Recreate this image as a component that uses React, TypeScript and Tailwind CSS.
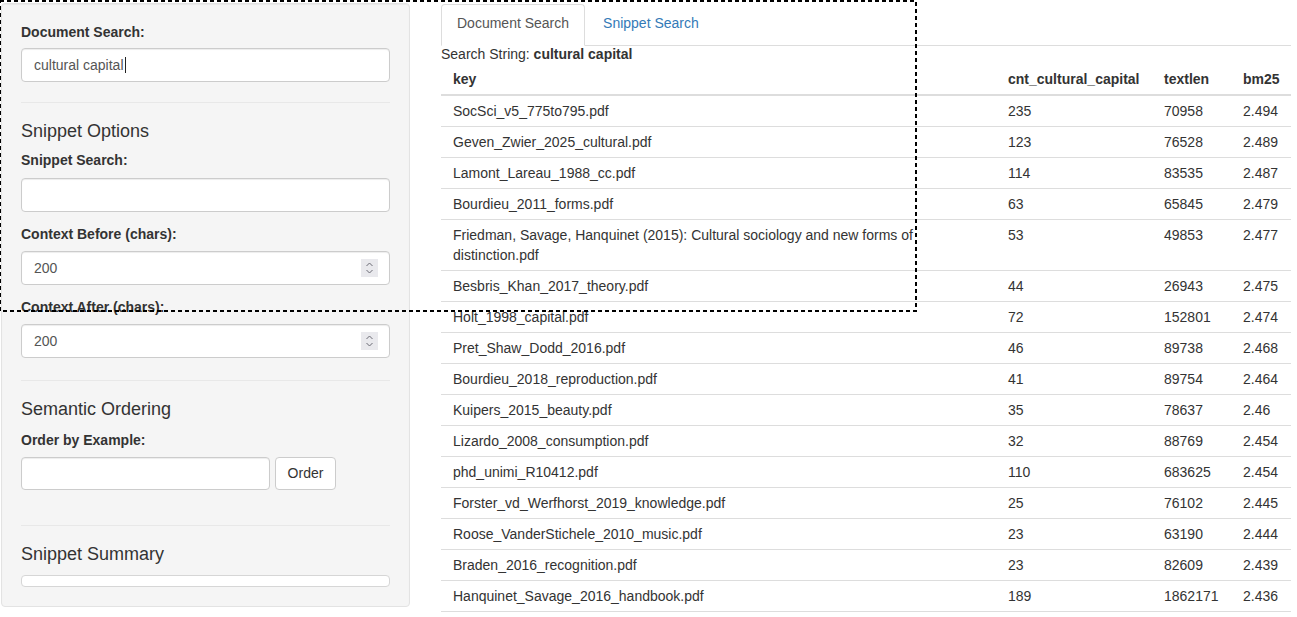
import React from 'react'

const rows: [string, string, string, string][] = [
  ['SocSci_v5_775to795.pdf', '235', '70958', '2.494'],
  ['Geven_Zwier_2025_cultural.pdf', '123', '76528', '2.489'],
  ['Lamont_Lareau_1988_cc.pdf', '114', '83535', '2.487'],
  ['Bourdieu_2011_forms.pdf', '63', '65845', '2.479'],
  ['Friedman, Savage, Hanquinet (2015): Cultural sociology and new forms of distinction.pdf', '53', '49853', '2.477'],
  ['Besbris_Khan_2017_theory.pdf', '44', '26943', '2.475'],
  ['Holt_1998_capital.pdf', '72', '152801', '2.474'],
  ['Pret_Shaw_Dodd_2016.pdf', '46', '89738', '2.468'],
  ['Bourdieu_2018_reproduction.pdf', '41', '89754', '2.464'],
  ['Kuipers_2015_beauty.pdf', '35', '78637', '2.46'],
  ['Lizardo_2008_consumption.pdf', '32', '88769', '2.454'],
  ['phd_unimi_R10412.pdf', '110', '683625', '2.454'],
  ['Forster_vd_Werfhorst_2019_knowledge.pdf', '25', '76102', '2.445'],
  ['Roose_VanderStichele_2010_music.pdf', '23', '63190', '2.444'],
  ['Braden_2016_recognition.pdf', '23', '82609', '2.439'],
  ['Hanquinet_Savage_2016_handbook.pdf', '189', '1862171', '2.436'],
]

const inputCls =
  'h-[34px] w-full rounded border border-[#ccc] bg-white px-3 text-[#555] shadow-[inset_0_1px_1px_rgba(0,0,0,0.075)] flex items-center'

const Label = ({ children, className = '' }: { children: React.ReactNode; className?: string }) => (
  <div className={`font-bold leading-5 ${className}`}>{children}</div>
)

const Heading = ({ children, className = '' }: { children: React.ReactNode; className?: string }) => (
  <div className={`text-[18px] font-medium leading-5 ${className}`}>{children}</div>
)

const Spinner = () => (
  <span className="ml-auto -mr-px flex h-[18px] w-[17px] flex-col items-center justify-center bg-[#e9e9ed]">
    <svg width="9" height="14" viewBox="0 0 9 14" fill="none" stroke="#6b6b75" strokeWidth="1">
      <path d="M1.5 5 L4.5 2 L7.5 5" />
      <path d="M1.5 9 L4.5 12 L7.5 9" />
    </svg>
  </span>
)

const App: React.FC = () => {
  return (
    <div className="relative h-[617px] w-[1297px] overflow-hidden bg-white text-[14px] text-[#333] font-['Liberation_Sans',Arial,sans-serif]">
      <div className="flex items-start">
        {/* SIDEBAR */}
        <aside className="ml-px mt-[3px] w-[409px] rounded border border-[#e3e3e3] bg-[#f5f5f5] px-[19px] pb-[19px] pt-[18px] shadow-[inset_0_1px_1px_rgba(0,0,0,0.05)]">
          <Label className="mb-[6px]">Document Search:</Label>
          <div className={`${inputCls} border-[#66afe9] shadow-[inset_0_1px_1px_rgba(0,0,0,0.075),0_0_8px_rgba(102,175,233,0.6)]`}>
            cultural capital
            <span className="ml-px inline-block h-[16px] w-px bg-[#222]" />
          </div>

          <hr className="mb-[18px] mt-5 border-[#e8e8e8]" />

          <Heading className="mb-[9px]">Snippet Options</Heading>
          <Label className="mb-2">Snippet Search:</Label>
          <div className={inputCls} />

          <Label className="mb-[7px] mt-3">Context Before (chars):</Label>
          <div className={inputCls}>
            200
            <Spinner />
          </div>

          <Label className="mb-[7px] mt-3">Context After (chars):</Label>
          <div className={inputCls}>
            200
            <Spinner />
          </div>

          <hr className="mb-[18px] mt-[22px] border-[#e8e8e8]" />

          <Heading className="mb-[11px]">Semantic Ordering</Heading>
          <Label className="mb-[7px]">Order by Example:</Label>
          <div className="flex gap-[5px]">
            <div className={`${inputCls} !w-[249px] !h-[33px]`} />
            <button className="h-[33px] w-[61px] rounded border border-[#ccc] bg-white text-[#333]">Order</button>
          </div>

          <hr className="mb-[18px] mt-[35px] border-[#e8e8e8]" />

          <Heading className="mb-[11px]">Snippet Summary</Heading>
          <div className="h-[12px] w-full rounded border border-[#d6d6d6] bg-white" />
        </aside>

        {/* MAIN */}
        <main className="ml-[31px] mt-[4px] w-[850px]">
          <ul className="flex border-b border-[#ddd]">
            <li className="-mb-px rounded-t border border-[#ddd] border-b-transparent bg-white px-[15px] pb-[11px] pt-[8px] leading-5 text-[#555]">
              Document Search
            </li>
            <li className="ml-[2px] border border-transparent px-[15px] pb-[11px] pt-[8px] leading-5 text-[#337ab7]">
              Snippet Search
            </li>
          </ul>

          <div className="leading-4">
            Search String: <span className="font-bold">cultural capital</span>
          </div>

          <table className="w-[850px] table-fixed border-collapse leading-5">
            <colgroup>
              <col className="w-[555px]" />
              <col className="w-[156px]" />
              <col className="w-[79px]" />
              <col className="w-[60px]" />
            </colgroup>
            <thead>
              <tr className="border-b-2 border-[#ddd] text-left">
                <th className="px-3 pb-[5px] pt-[7px] font-bold">key</th>
                <th className="px-3 pb-[5px] pt-[7px] font-bold">cnt_cultural_capital</th>
                <th className="px-3 pb-[5px] pt-[7px] font-bold">textlen</th>
                <th className="px-3 pb-[5px] pt-[7px] font-bold">bm25</th>
              </tr>
            </thead>
            <tbody>
              {rows.map(([key, cnt, len, bm]) => (
                <tr key={key} className="border-b border-[#ddd] align-top">
                  <td className="px-3 py-[5px]">{key}</td>
                  <td className="px-3 py-[5px]">{cnt}</td>
                  <td className="px-3 py-[5px]">{len}</td>
                  <td className="px-3 py-[5px]">{bm}</td>
                </tr>
              ))}
            </tbody>
          </table>
        </main>
      </div>

      {/* selection rectangle */}
      <svg className="pointer-events-none absolute left-[-1px] top-0" width="918" height="313">
        <rect x="1" y="1" width="916" height="310" fill="none" stroke="#000" strokeWidth="2" strokeDasharray="4 3" />
      </svg>
    </div>
  )
}

export default App
